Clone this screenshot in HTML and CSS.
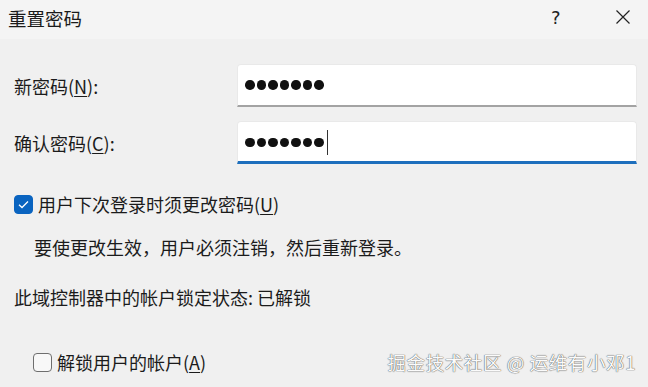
FILE: index.html
```html
<!DOCTYPE html>
<html lang="zh-CN">
<head>
    <meta charset="UTF-8" />
    <title>重置密码</title>
    <link rel="stylesheet" href="styles.css">
</head>
<body>
    <div class="dialog">
        <div class="titlebar">
            <span class="title">重置密码</span>
            <span class="help">?</span>
            <span class="close">
                <svg width="16" height="16" viewBox="0 0 16 16"><path d="M1.5 1.5 L14.5 14.5 M14.5 1.5 L1.5 14.5" stroke="#222" stroke-width="1.2" fill="none"/></svg>
            </span>
        </div>

        <div class="content">
            <div class="form">
                <label class="label">新密码(<u>N</u>):</label>
                <div class="field">
                    <span class="dot"></span><span class="dot"></span><span class="dot"></span><span class="dot"></span><span class="dot"></span><span class="dot"></span><span class="dot"></span>
                </div>

                <label class="label">确认密码(<u>C</u>):</label>
                <div class="field focused">
                    <span class="dot"></span><span class="dot"></span><span class="dot"></span><span class="dot"></span><span class="dot"></span><span class="dot"></span><span class="dot"></span><span class="caret"></span>
                </div>
            </div>

            <div class="check-row">
                <span class="checkbox checked">
                    <svg width="11" height="9" viewBox="0 0 11 9"><path d="M1 4.8 L4 7.5 L10 1.5" stroke="#fff" stroke-width="1.3" fill="none"/></svg>
                </span>
                <span>用户下次登录时须更改密码(<u>U</u>)</span>
            </div>

            <p class="note">要使更改生效，用户必须注销，然后重新登录。</p>

            <p class="status">此域控制器中的帐户锁定状态: 已解锁</p>

            <div class="check-row unlock">
                <span class="checkbox"></span>
                <span>解锁用户的帐户(<u>A</u>)</span>
            </div>
        </div>

        <div class="watermark">掘金技术社区 @ 运维有小邓1</div>
    </div>
</body>
</html>
```

FILE: styles.css
```css
body {
    margin: 0;
    font-family: "Noto Sans CJK SC", "Noto Sans", sans-serif;
    background-color: #f0f0f0;
    color: #1b1b1b;
}

.dialog {
    position: relative;
    width: 648px;
    height: 387px;
    overflow: hidden;
    background-color: #f0f0f0;
}

.titlebar {
    height: 39px;
    background-color: #f4f4f4;
    display: flex;
    align-items: center;
    padding-left: 8px;
}

.title {
    font-size: 18.5px;
    flex: 1;
    margin-top: -4px;
}

.help {
    font-family: "DejaVu Sans", sans-serif;
    font-size: 18px;
    width: 11px;
    margin-right: 53px;
    margin-top: -4px;
    color: #222;
}

.close {
    width: 16px;
    height: 16px;
    margin-right: 17px;
    margin-top: -6px;
    display: flex;
}

.content {
    padding: 0 11px 0 14px;
    font-size: 18px;
}

.form {
    display: grid;
    grid-template-columns: 223px 1fr;
    row-gap: 14px;
    align-items: center;
    margin-top: 25px;
}

.label {
    line-height: 24px;
}

u {
    text-decoration-thickness: 1px;
    text-underline-offset: 2px;
}

.field {
    height: 43px;
    box-sizing: border-box;
    background-color: #fff;
    border: 1px solid #e9e9e9;
    border-bottom: 2px solid #a3a3a3;
    border-radius: 4px 4px 0 0;
    display: flex;
    align-items: center;
    padding-left: 7px;
}

.field.focused {
    border-bottom: 3px solid #1d6fbd;
    padding-top: 2px;
}

.dot {
    width: 9.5px;
    height: 9.5px;
    border-radius: 50%;
    background-color: #111;
    margin-right: 2px;
}

.caret {
    width: 1.5px;
    height: 25px;
    background-color: #333;
    margin-left: 1px;
}

.check-row {
    display: flex;
    align-items: center;
    gap: 5px;
    line-height: 24px;
    margin-top: 28px;
}

.checkbox {
    width: 19px;
    height: 19px;
    box-sizing: border-box;
    border: 1px solid #6e6e6e;
    border-radius: 4px;
    background-color: #f8f8f8;
    display: flex;
    align-items: center;
    justify-content: center;
}

.checkbox.checked {
    background-color: #0a64c0;
    border-color: #0a64c0;
}

.note {
    margin: 19px 0 0 20px;
    line-height: 24px;
}

.status {
    margin: 26px 0 0;
    line-height: 24px;
}

.unlock {
    margin-top: 41px;
    padding-left: 19px;
}

.watermark {
    position: absolute;
    right: 12px;
    bottom: 12px;
    font-size: 18.5px;
    color: #fbfbfb;
    text-shadow: 0 0 1px #555, 0 0 1px #555;
    letter-spacing: 0.6px;
}
```
